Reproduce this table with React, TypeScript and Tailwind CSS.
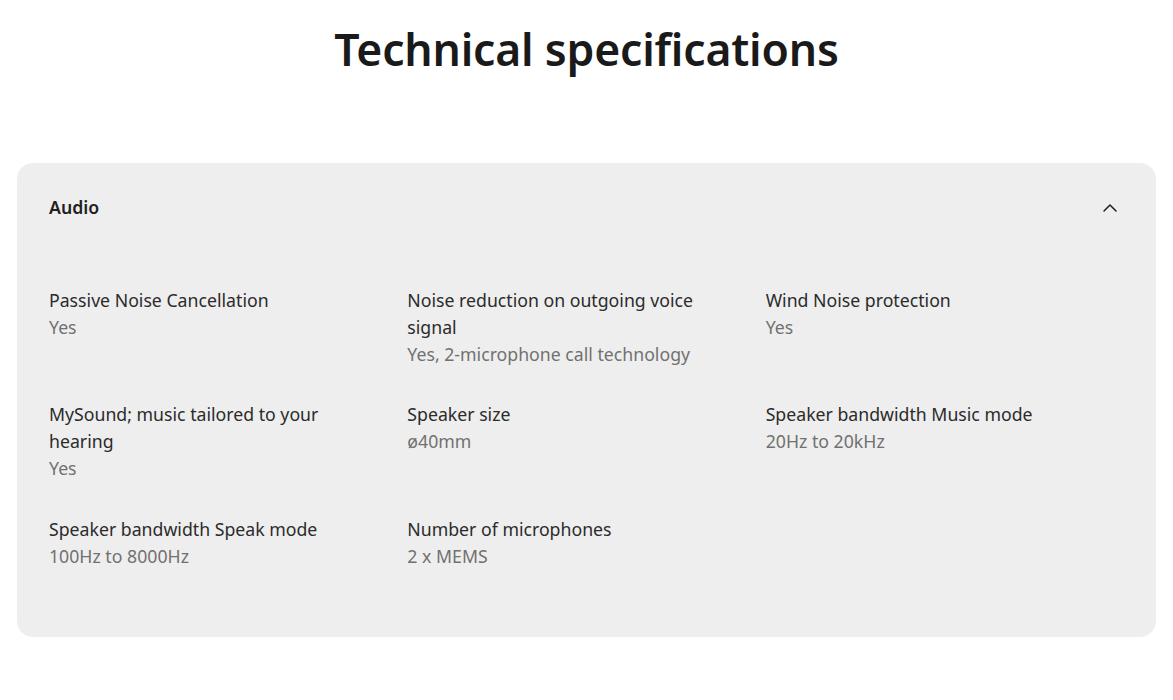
import React from 'react';
import { ChevronUp } from 'lucide-react';

const specs = [
  { label: 'Passive Noise Cancellation', value: 'Yes' },
  { label: 'Noise reduction on outgoing voice signal', value: 'Yes, 2-microphone call technology' },
  { label: 'Wind Noise protection', value: 'Yes' },
  { label: 'MySound; music tailored to your hearing', value: 'Yes' },
  { label: 'Speaker size', value: 'ø40mm' },
  { label: 'Speaker bandwidth Music mode', value: '20Hz to 20kHz' },
  { label: 'Speaker bandwidth Speak mode', value: '100Hz to 8000Hz' },
  { label: 'Number of microphones', value: '2 x MEMS' },
];

export default function App() {
  return (
    <div className="min-h-screen w-full bg-white font-['Noto_Sans',sans-serif] text-[#1f1f1f]">
      <h1 className="pt-[19px] text-center text-[44.5px] font-semibold leading-[60px] tracking-[-0.2px] text-[#1a1a1a]">
        Technical specifications
      </h1>
      <div className="mx-[17px] mt-[84px] rounded-[16px] bg-[#eeeeee] px-[32px] pt-[31px] pb-[67.5px]">
        <div className="flex items-center justify-between">
          <span className="text-[17.7px] font-semibold leading-[27px] text-[#1f1f1f]">Audio</span>
          <ChevronUp size={24} strokeWidth={1.5} className="mr-[2px] text-[#1f1f1f]" />
        </div>
        <div className="mt-[65.5px] grid grid-cols-3 gap-y-[33.5px]">
          {specs.map(s => (
            <div key={s.label} className="pr-[40px] text-[17.7px] leading-[27px]">
              <div className="text-[#2b2b2b]">{s.label}</div>
              <div className="text-[#717171]">{s.value}</div>
            </div>
          ))}
        </div>
      </div>
    </div>
  );
}
